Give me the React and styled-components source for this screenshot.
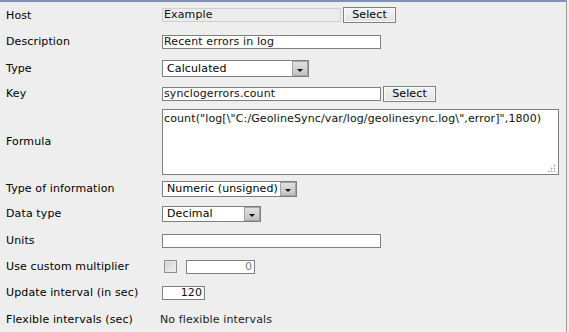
import React from "react";
import styled, { createGlobalStyle } from "styled-components";

const GlobalStyle = createGlobalStyle`
  html, body {
    margin: 0;
    padding: 0;
    background: #eeeeee;
  }
  body {
    font-family: "DejaVu Sans", Verdana, sans-serif;
    font-size: 11px;
    letter-spacing: 0.12px;
    color: #000;
  }
`;

const Panel = styled.div`
  box-sizing: border-box;
  width: 567px;
  height: 332px;
  border-top: 2px solid #7e92bd;
  border-right: 1px solid #9c9c9c;
  background: #eeeeee;
  display: flex;
  flex-direction: column;
  overflow: hidden;
`;

const Row = styled.div`
  display: flex;
  align-items: center;
  height: ${(p) => p.$h}px;
  flex-shrink: 0;
`;

const Label = styled.div`
  box-sizing: border-box;
  width: 162px;
  padding-left: 6px;
  white-space: nowrap;
`;

const Value = styled.div`
  display: flex;
  align-items: center;
  gap: ${(p) => p.$gap || 2}px;
`;

const Input = styled.div`
  box-sizing: border-box;
  width: ${(p) => p.$w}px;
  height: 14px;
  line-height: 12px;
  padding: 0 2px 0 1px;
  border: 1px solid ${(p) => (p.$readonly ? "#cfcfcf" : "#7f7f7f")};
  background: ${(p) => (p.$readonly ? "#ececec" : "#ffffff")};
  color: ${(p) => (p.$muted ? "#6f7c98" : "#111")};
  text-align: ${(p) => (p.$right ? "right" : "left")};
  white-space: nowrap;
  overflow: hidden;
`;

const Button = styled.div`
  box-sizing: border-box;
  width: 53px;
  height: 16px;
  line-height: 14px;
  text-align: center;
  border: 1px solid #7f7f7f;
  background: linear-gradient(#f3f3f3, #e3e3e3);
  box-shadow: inset 0 0 0 1px #fafafa;
`;

const Select = styled.div`
  box-sizing: border-box;
  display: flex;
  width: ${(p) => p.$w}px;
  height: ${(p) => p.$h || 16}px;
  border: 1px solid #7f7f7f;
  background: #fff;
`;

const SelectText = styled.span`
  flex: 1;
  padding-left: 4px;
  line-height: ${(p) => (p.$h || 16) - 2}px;
  white-space: nowrap;
  overflow: hidden;
`;

const Arrow = styled.span`
  box-sizing: border-box;
  width: 16px;
  height: 100%;
  border: 1px solid #a3a3a3;
  background: linear-gradient(#e0e0e0, #c2c2c2);
  display: flex;
  align-items: flex-end;
  justify-content: center;
  padding-bottom: 3px;
  &::after {
    content: "";
    border-left: 3px solid transparent;
    border-right: 3px solid transparent;
    border-top: 3px solid #111;
  }
`;

const AreaWrap = styled.div`
  position: relative;
  box-sizing: border-box;
  width: 397px;
  height: 66px;
  border: 1px solid #7f7f7f;
  background: #fff;
  padding: 2px 1px;
  line-height: 13px;
  color: #111;
  white-space: nowrap;
  &::after {
    content: "";
    position: absolute;
    right: 2px;
    bottom: 2px;
    width: 8px;
    height: 8px;
    background:
      radial-gradient(circle at 6.5px 1.5px, #b5b5b5 0.9px, transparent 1.1px),
      radial-gradient(circle at 3.5px 4.5px, #b5b5b5 0.9px, transparent 1.1px),
      radial-gradient(circle at 6.5px 4.5px, #b5b5b5 0.9px, transparent 1.1px),
      radial-gradient(circle at 0.5px 7.5px, #b5b5b5 0.9px, transparent 1.1px),
      radial-gradient(circle at 3.5px 7.5px, #b5b5b5 0.9px, transparent 1.1px),
      radial-gradient(circle at 6.5px 7.5px, #b5b5b5 0.9px, transparent 1.1px);
  }
`;

const Checkbox = styled.span`
  box-sizing: border-box;
  width: 13px;
  height: 13px;
  margin-left: 2px;
  border: 1px solid #8e8e8e;
  background: linear-gradient(135deg, #d0d0d0, #f2f2f2);
  box-shadow: inset 0 0 0 1px #e6e6e6;
`;

const PlainText = styled.span`
  margin-left: -2px;
  color: #1c1c1c;
`;

const DropDown = ({ w, h, children }) => (
  <Select $w={w} $h={h}>
    <SelectText $h={h}>{children}</SelectText>
    <Arrow />
  </Select>
);

export default function App() {
  return (
    <>
      <GlobalStyle />
      <Panel>
        <Row $h={26}>
          <Label>Host</Label>
          <Value>
            <Input $w={179} $readonly>Example</Input>
            <Button>Select</Button>
          </Value>
        </Row>
        <Row $h={27}>
          <Label>Description</Label>
          <Value>
            <Input $w={219}>Recent errors in log</Input>
          </Value>
        </Row>
        <Row $h={26}>
          <Label>Type</Label>
          <Value>
            <DropDown w={147} h={17}>Calculated</DropDown>
          </Value>
        </Row>
        <Row $h={25}>
          <Label>Key</Label>
          <Value>
            <Input $w={219}>synclogerrors.count</Input>
            <Button>Select</Button>
          </Value>
        </Row>
        <Row $h={71}>
          <Label>Formula</Label>
          <Value>
            <AreaWrap>
              count("log[\"C:/GeolineSync/var/log/geolinesync.log\",error]",1800)
            </AreaWrap>
          </Value>
        </Row>
        <Row $h={23}>
          <Label>Type of information</Label>
          <Value>
            <DropDown w={135}>Numeric (unsigned)</DropDown>
          </Value>
        </Row>
        <Row $h={27}>
          <Label>Data type</Label>
          <Value>
            <DropDown w={99}>Decimal</DropDown>
          </Value>
        </Row>
        <Row $h={27}>
          <Label>Units</Label>
          <Value>
            <Input $w={219} />
          </Value>
        </Row>
        <Row $h={25}>
          <Label>Use custom multiplier</Label>
          <Value $gap={9}>
            <Checkbox />
            <Input $w={69} $right $muted>0</Input>
          </Value>
        </Row>
        <Row $h={27}>
          <Label>Update interval (in sec)</Label>
          <Value>
            <Input $w={43} $right>120</Input>
          </Value>
        </Row>
        <Row $h={26}>
          <Label>Flexible intervals (sec)</Label>
          <Value>
            <PlainText>No flexible intervals</PlainText>
          </Value>
        </Row>
      </Panel>
    </>
  );
}
